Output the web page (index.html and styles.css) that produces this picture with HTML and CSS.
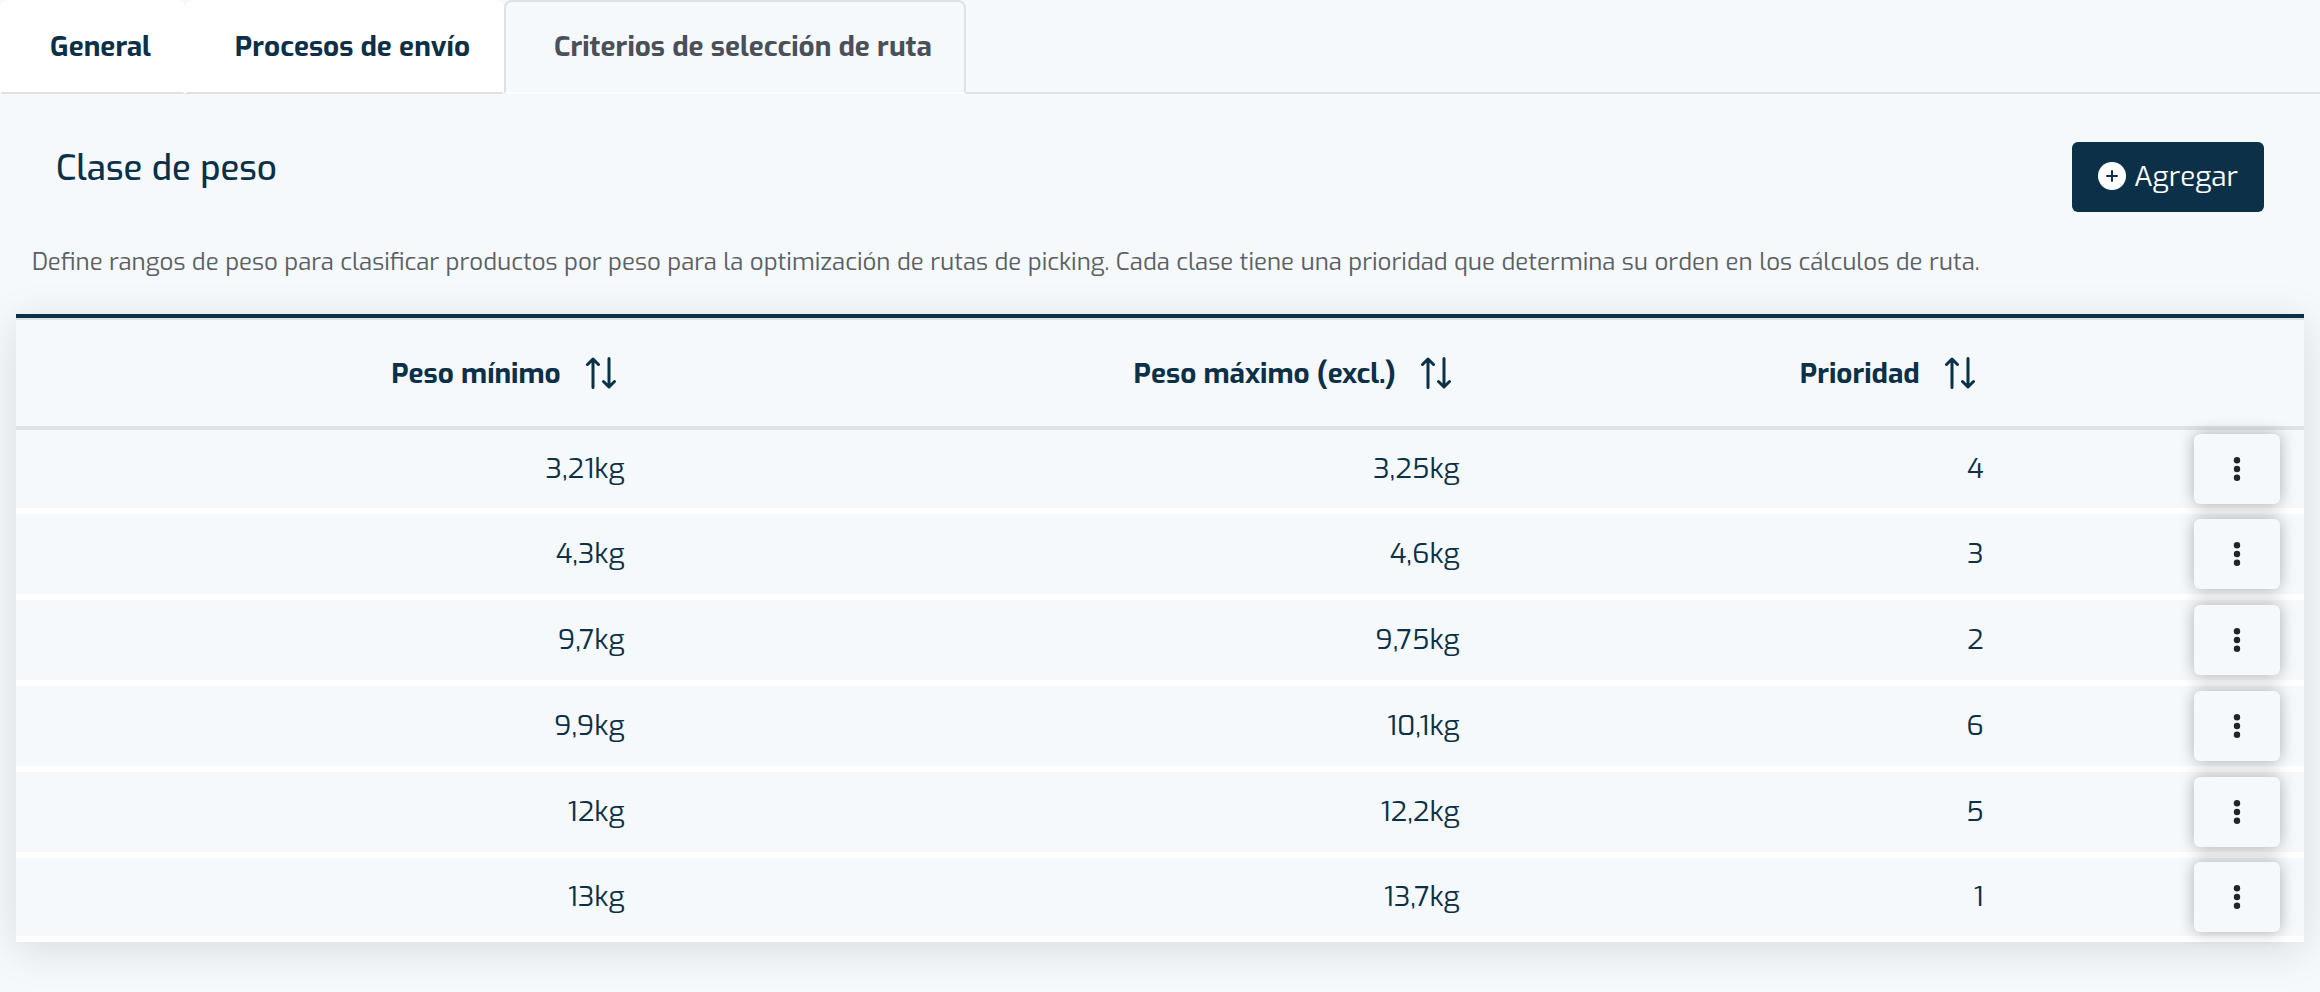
FILE: index.html
```html
<!DOCTYPE html>
<html lang="es">
<head>
<meta charset="utf-8">
<title>Criterios de selección de ruta</title>
<link rel="stylesheet" href="styles.css">
</head>
<body>
<svg class="sprite" aria-hidden="true">
  <symbol id="sort" viewBox="0 0 32 32">
    <path d="M8 30.500V2M2.500 7.500 8 2l5.500 5.500M24 1.500V30M18.500 24.500 24 30l5.500-5.500" fill="none" stroke="currentColor" stroke-width="3" stroke-linecap="round" stroke-linejoin="round"/>
  </symbol>
  <symbol id="dots" viewBox="0 0 8 24">
    <circle cx="4" cy="3.200" r="3.200"/><circle cx="4" cy="12" r="3.200"/><circle cx="4" cy="20.800" r="3.200"/>
  </symbol>
</svg>
<nav class="tabs" role="tablist">
  <button class="tab" role="tab" aria-selected="false">General</button>
  <button class="tab" role="tab" aria-selected="false">Procesos de envío</button>
  <button class="tab active" role="tab" aria-selected="true">Criterios de selección de ruta</button>
</nav>
<main>
  <header class="head">
    <h1>Clase de peso</h1>
    <button class="add">
      <svg class="plus" viewBox="0 0 28 28" aria-hidden="true"><circle cx="14" cy="14" r="14" fill="#fff"/><path d="M14 9v10M9 14h10" stroke="#0b3047" stroke-width="2" stroke-linecap="round"/></svg>
      <span>Agregar</span>
    </button>
  </header>
  <p class="description">Define rangos de peso para clasificar productos por peso para la optimización de rutas de picking. Cada clase tiene una prioridad que determina su orden en los cálculos de ruta.</p>
  <table class="weights">
    <colgroup><col class="c-min"><col class="c-max"><col class="c-prio"><col class="c-menu"></colgroup>
    <thead>
      <tr>
        <th><button class="sort">Peso mínimo<svg><use href="#sort"/></svg></button></th>
        <th><button class="sort">Peso máximo (excl.)<svg><use href="#sort"/></svg></button></th>
        <th><button class="sort">Prioridad<svg><use href="#sort"/></svg></button></th>
        <th></th>
      </tr>
    </thead>
    <tbody>
      <tr><td>3,21kg</td><td>3,25kg</td><td>4</td><td><button class="menu" aria-label="Acciones"><svg><use href="#dots"/></svg></button></td></tr>
      <tr><td>4,3kg</td><td>4,6kg</td><td>3</td><td><button class="menu" aria-label="Acciones"><svg><use href="#dots"/></svg></button></td></tr>
      <tr><td>9,7kg</td><td>9,75kg</td><td>2</td><td><button class="menu" aria-label="Acciones"><svg><use href="#dots"/></svg></button></td></tr>
      <tr><td>9,9kg</td><td>10,1kg</td><td>6</td><td><button class="menu" aria-label="Acciones"><svg><use href="#dots"/></svg></button></td></tr>
      <tr><td>12kg</td><td>12,2kg</td><td>5</td><td><button class="menu" aria-label="Acciones"><svg><use href="#dots"/></svg></button></td></tr>
      <tr><td>13kg</td><td>13,7kg</td><td>1</td><td><button class="menu" aria-label="Acciones"><svg><use href="#dots"/></svg></button></td></tr>
    </tbody>
  </table>
</main>
</body>
</html>
```
FILE: styles.css
```css
* { box-sizing: border-box; }
body {
  margin: 0;
  background: #f5f9fc;
  color: #0b3047;
  font-family: Exo, "Exo 2", Roboto, sans-serif;
  font-size: 28px;
}
button { font: inherit; color: inherit; border: 0; background: none; padding: 0; cursor: pointer; }
.sprite { position: absolute; width: 0; height: 0; }

.tabs { display: flex; height: 94px; box-shadow: inset 0 -2px #dee2e6; }
.tab {
  padding: 0 32px 2px 48px;
  border: 2px solid transparent;
  border-bottom-color: #dee2e6;
  border-radius: 8px 8px 0 0;
  background: #fff;
  font-weight: 700;
  text-align: left;
  white-space: nowrap;
}
.tab.active { background: #f5f9fc; border-color: #dee2e6 #dee2e6 #fff; color: #495057; }

.head { display: flex; justify-content: space-between; align-items: flex-start; padding: 48px 56px 0; }
h1 { margin: 0; font-size: 35px; font-weight: 500; line-height: 52px; }
.add {
  display: flex; align-items: center; justify-content: center; gap: 8px;
  min-width: 192px; height: 70px; padding-bottom: 2px;
  border-radius: 6px; background: #0b3047; color: #fff;
}
.plus { width: 28px; height: 28px; }
.description { margin: 32px 32px 0; color: #5c6063; font-size: 24px; font-weight: 400; line-height: 36px; }

.weights {
  width: calc(100% - 32px);
  margin: 34px 16px 48px;
  table-layout: fixed;
  border-collapse: separate; border-spacing: 0;
  border-top: 4px solid #0b3047;
  box-shadow: 0 8px 40px rgba(0, 0, 0, .12);
  background: #f5f9fc;
}
.c-min { width: 27.3%; }
.c-max { width: 36.5%; }
.c-prio { width: 22.9%; }
th { height: 112px; padding: 0 16px; border-top: 2px solid #dee2e6; border-bottom: 4px solid #dee2e6; text-align: right; }
.sort { display: inline-flex; align-items: center; gap: 24px; padding-right: 8px; font-weight: 700; white-space: nowrap; }
.sort svg { width: 32px; height: 32px; }
td { height: 86px; padding: 0 16px; border-bottom: 6px solid #fff; text-align: right; font-weight: 400; }
tr:first-child td, tr:last-child td { height: 84px; }
td:not(:last-child) { padding-bottom: 2px; }
td:last-child { padding-right: 24px; }
.menu {
  display: inline-flex; align-items: center; justify-content: center;
  width: 86px; height: 70px; vertical-align: middle;
  border-radius: 6px; background: #f5f9fc; color: #212529;
  box-shadow: 0 0 16px rgba(0, 0, 0, .3);
}
.menu svg { width: 8px; height: 24px; fill: currentColor; }
```
